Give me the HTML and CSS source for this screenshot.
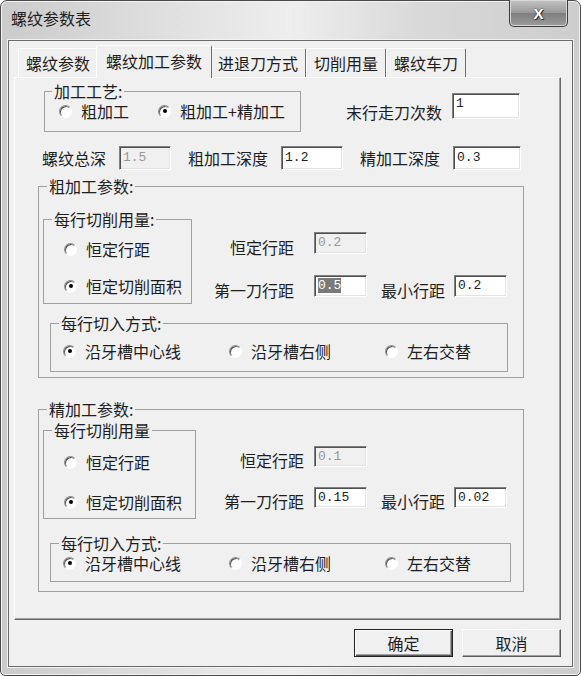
FILE: index.html
```html
<!DOCTYPE html>
<html lang="zh-CN">
  <head>
    <meta charset="UTF-8" />
    <title>螺纹参数表</title>
    <link rel="stylesheet" href="styles.css">
  </head>
  <body>
    <div class="window">
      <div class="titlebar">
        <span class="title">螺纹参数表</span>
        <button class="close" aria-label="关闭">X</button>
      </div>

      <div class="client">
        <div class="tabs">
          <div class="tab">螺纹参数</div>
          <div class="tab active">螺纹加工参数</div>
          <div class="tab">进退刀方式</div>
          <div class="tab">切削用量</div>
          <div class="tab">螺纹车刀</div>
        </div>

        <div class="panel">
          <div class="row-top">
            <fieldset class="group craft">
              <legend>加工工艺:</legend>
              <div class="craft-opts">
                <label class="radio"><span class="dot"></span>粗加工</label>
                <label class="radio on"><span class="dot"></span>粗加工+精加工</label>
              </div>
            </fieldset>
            <span class="lbl passes">末行走刀次数</span>
            <span class="field passes-field">1</span>
          </div>

          <div class="row-depth">
            <span class="lbl">螺纹总深</span>
            <span class="field off w52">1.5</span>
            <span class="lbl">粗加工深度</span>
            <span class="field w62">1.2</span>
            <span class="lbl">精加工深度</span>
            <span class="field w68">0.3</span>
          </div>

          <!-- rough cut -->
          <fieldset class="group section rough">
            <legend>粗加工参数:</legend>
            <div class="section-top">
              <fieldset class="group feed">
                <legend>每行切削用量:</legend>
                <div class="feed-opts">
                  <label class="radio"><span class="dot"></span>恒定行距</label>
                  <label class="radio on"><span class="dot"></span>恒定切削面积</label>
                </div>
              </fieldset>
              <div class="params">
                <div class="prow">
                  <span class="lbl key">恒定行距</span>
                  <span class="field off">0.2</span>
                </div>
                <div class="prow">
                  <span class="lbl key">第一刀行距</span>
                  <span class="field"><span class="sel">0.5</span></span>
                  <span class="lbl min">最小行距</span>
                  <span class="field">0.2</span>
                </div>
              </div>
            </div>
            <fieldset class="group entry">
              <legend>每行切入方式:</legend>
              <div class="entry-opts">
                <label class="radio on"><span class="dot"></span>沿牙槽中心线</label>
                <label class="radio"><span class="dot"></span>沿牙槽右侧</label>
                <label class="radio"><span class="dot"></span>左右交替</label>
              </div>
            </fieldset>
          </fieldset>

          <!-- finish cut -->
          <fieldset class="group section fine">
            <legend>精加工参数:</legend>
            <div class="section-top">
              <fieldset class="group feed">
                <legend>每行切削用量</legend>
                <div class="feed-opts">
                  <label class="radio"><span class="dot"></span>恒定行距</label>
                  <label class="radio on"><span class="dot"></span>恒定切削面积</label>
                </div>
              </fieldset>
              <div class="params">
                <div class="prow">
                  <span class="lbl key">恒定行距</span>
                  <span class="field off">0.1</span>
                </div>
                <div class="prow">
                  <span class="lbl key">第一刀行距</span>
                  <span class="field">0.15</span>
                  <span class="lbl min">最小行距</span>
                  <span class="field">0.02</span>
                </div>
              </div>
            </div>
            <fieldset class="group entry">
              <legend>每行切入方式:</legend>
              <div class="entry-opts">
                <label class="radio on"><span class="dot"></span>沿牙槽中心线</label>
                <label class="radio"><span class="dot"></span>沿牙槽右侧</label>
                <label class="radio"><span class="dot"></span>左右交替</label>
              </div>
            </fieldset>
          </fieldset>
        </div>

        <div class="actions">
          <button class="btn default">确定</button>
          <button class="btn">取消</button>
        </div>
      </div>
    </div>
  </body>
</html>
```

FILE: styles.css
```css
body {
  margin: 0;
  background: #fff;
  font-family: "Noto Sans CJK SC", "Noto Sans", sans-serif;
  font-size: 16px;
  line-height: 18px;
  color: #1e1e1e;
}
.window {
  width: 581px;
  height: 676px;
  box-sizing: border-box;
  border: 1px solid #4a4a4a;
  border-radius: 7px 7px 5px 5px;
  padding: 0 7px 8px;
  display: flex;
  flex-direction: column;
  background: linear-gradient(90deg, #cbcbcb, #e4e4e4 35%, #eeeeee 50%, #d9d9d9 72%, #cdcdcd);
  box-shadow: inset 0 0 0 1px #f3f3f3;
}
.titlebar {
  height: 39px;
  display: flex;
  align-items: flex-start;
  flex-shrink: 0;
}
.title {
  margin: 8px 0 0 3px;
}
.close {
  margin: -1px 5px 0 auto;
  width: 59px;
  height: 27px;
  border: 1px solid #3c3c3c;
  border-top: none;
  border-radius: 0 0 5px 5px;
  background: linear-gradient(#c4c4c4, #9a9a9a 48%, #7e7e7e 52%, #9c9c9c);
  box-shadow: inset 0 0 0 1px #d6d6d6;
  color: #fff;
  font: bold 15px "Liberation Sans", sans-serif;
  text-shadow: 0 0 2px #222, 1px 1px 0 #333;
  padding: 0;
}
.client {
  flex: 1;
  border: 1px solid #6b6b6b;
  box-shadow: 0 0 0 1px #f2f2f2;
  background: #f0f0f0;
  display: flex;
  flex-direction: column;
}

/* tabs */
.tabs {
  display: flex;
  align-items: flex-end;
  height: 32px;
  margin: 4px 0 0 9px;
}
.tab {
  height: 28px;
  line-height: 28px;
  padding: 0 7px;
  border-top: 1px solid #fff;
  border-left: 1px solid #fff;
  border-right: 1px solid #6e6e6e;
  border-radius: 2px 2px 0 0;
}
.tab.active {
  position: relative;
  z-index: 1;
  height: 32px;
  line-height: 30px;
  margin: 0 -2px -1px;
  padding: 0 9px;
  background: #f0f0f0;
}
.panel {
  width: 547px;
  height: 543px;
  box-sizing: border-box;
  margin-left: 5px;
  border: 1px solid;
  border-color: #fff #696969 #696969 #fff;
  box-shadow: inset -1px -1px 0 #a0a0a0;
  padding: 4px 0 0 23px;
}

/* group boxes */
.group {
  margin: 0;
  padding: 0;
  min-width: 0;
  box-sizing: border-box;
  border: 1px solid #a0a0a0;
}
.group legend {
  margin-left: 8px;
  padding: 0 2px;
  line-height: 18px;
}
.lbl {
  white-space: nowrap;
}
.field {
  display: inline-block;
  box-sizing: border-box;
  height: 22px;
  border: 1px solid;
  border-color: #808080 #fff #fff #808080;
  box-shadow: inset 1px 1px 0 #505050, inset -1px -1px 0 #e3e3e3;
  background: #fff;
  padding: 0 0 0 3px;
  font: 13px "Liberation Mono", monospace;
  line-height: 20px;
  color: #222;
}
.field.off {
  background: #f0f0f0;
  color: #999;
}
.sel {
  background: #7a7a7a;
  color: #fff;
}
.radio {
  display: inline-flex;
  align-items: center;
  gap: 9px;
  white-space: nowrap;
}
.dot {
  width: 13px;
  height: 13px;
  box-sizing: border-box;
  border-radius: 50%;
  border: 1px solid;
  border-color: #8a8a8a #fff #fff #8a8a8a;
  box-shadow: inset 1px 1px 0 #555;
  background: #fff;
  display: flex;
  align-items: center;
  justify-content: center;
}
.radio.on .dot::after {
  content: "";
  width: 4px;
  height: 4px;
  border-radius: 50%;
  background: #000;
}

/* first rows */
.row-top {
  display: flex;
  align-items: flex-start;
}
.craft {
  margin-left: 6px;
  width: 257px;
}
.craft legend {
  margin-left: 7px;
}
.craft-opts {
  display: flex;
  gap: 29px;
  padding: 2px 0 11px 14px;
}
.passes {
  margin: 21px 0 0 45px;
}
.passes-field {
  margin: 11px 0 0 10px;
  width: 68px;
  height: 26px;
}
.row-depth {
  display: flex;
  align-items: center;
  margin: 14px 0 0 4px;
}
.row-depth .field {
  height: 24px;
  line-height: 22px;
  margin-left: 13px;
}
.row-depth .lbl {
  margin-left: 17px;
}
.row-depth .lbl:first-child {
  margin-left: 0;
}
.w52 { width: 52px; }
.w62 { width: 62px; }
.w68 { width: 68px; }

/* parameter sections */
.section {
  width: 486px;
}
.rough {
  margin-top: 7px;
  padding-bottom: 5px;
}
.fine {
  margin-top: 22px;
  padding-bottom: 9px;
}
.section-top {
  display: flex;
  align-items: flex-start;
}
.feed {
  margin-left: 4px;
}
.feed-opts {
  display: flex;
  flex-direction: column;
  align-items: flex-start;
  padding-left: 20px;
}
.rough .feed {
  width: 149px;
  margin-top: 15px;
}
.rough .feed-opts {
  gap: 19px;
  padding-top: 12px;
  padding-bottom: 8px;
}
.fine .feed {
  width: 153px;
  margin-top: 3px;
}
.fine .feed-opts {
  gap: 22px;
  padding-top: 14px;
  padding-bottom: 7px;
}
.params {
  display: flex;
  flex-direction: column;
}
.prow {
  display: flex;
  align-items: flex-end;
}
.prow .field {
  width: 53px;
}
.key {
  text-align: right;
  margin-bottom: -2px;
}
.min {
  margin: 0 9px -2px 14px;
}
.rough .params {
  margin: 37px 0 0 2px;
  gap: 21px;
}
.rough .key {
  width: 100px;
  margin-right: 20px;
}
.fine .params {
  margin-top: 28px;
  gap: 20px;
}
.fine .prow .field {
  height: 21px;
  line-height: 19px;
}
.fine .key {
  width: 108px;
  margin-right: 10px;
}
.entry {
  margin-left: 11px;
}
.entry-opts {
  display: grid;
  grid-template-columns: 166px 156px auto;
  padding-left: 12px;
}
.rough .entry {
  width: 458px;
  margin-top: 10px;
}
.rough .entry-opts {
  padding-top: 10px;
  padding-bottom: 11px;
}
.fine .entry {
  width: 461px;
  margin-top: 15px;
}
.fine .entry-opts {
  padding-top: 2px;
  padding-bottom: 9px;
}

/* buttons */
.actions {
  display: flex;
  justify-content: flex-end;
  gap: 9px;
  margin: 9px 11px 0 0;
}
.btn {
  width: 99px;
  height: 28px;
  padding: 0;
  font-family: inherit;
  font-size: 16px;
  color: #1e1e1e;
  background: #f0f0f0;
  border: 1px solid;
  border-color: #fff #5a5a5a #5a5a5a #fff;
  box-shadow: inset -1px -1px 0 #a0a0a0;
}
.btn.default {
  border-color: #222;
  box-shadow: inset 1px 1px 0 #fff, inset -1px -1px 0 #5a5a5a, inset -2px -2px 0 #a0a0a0;
}
```
